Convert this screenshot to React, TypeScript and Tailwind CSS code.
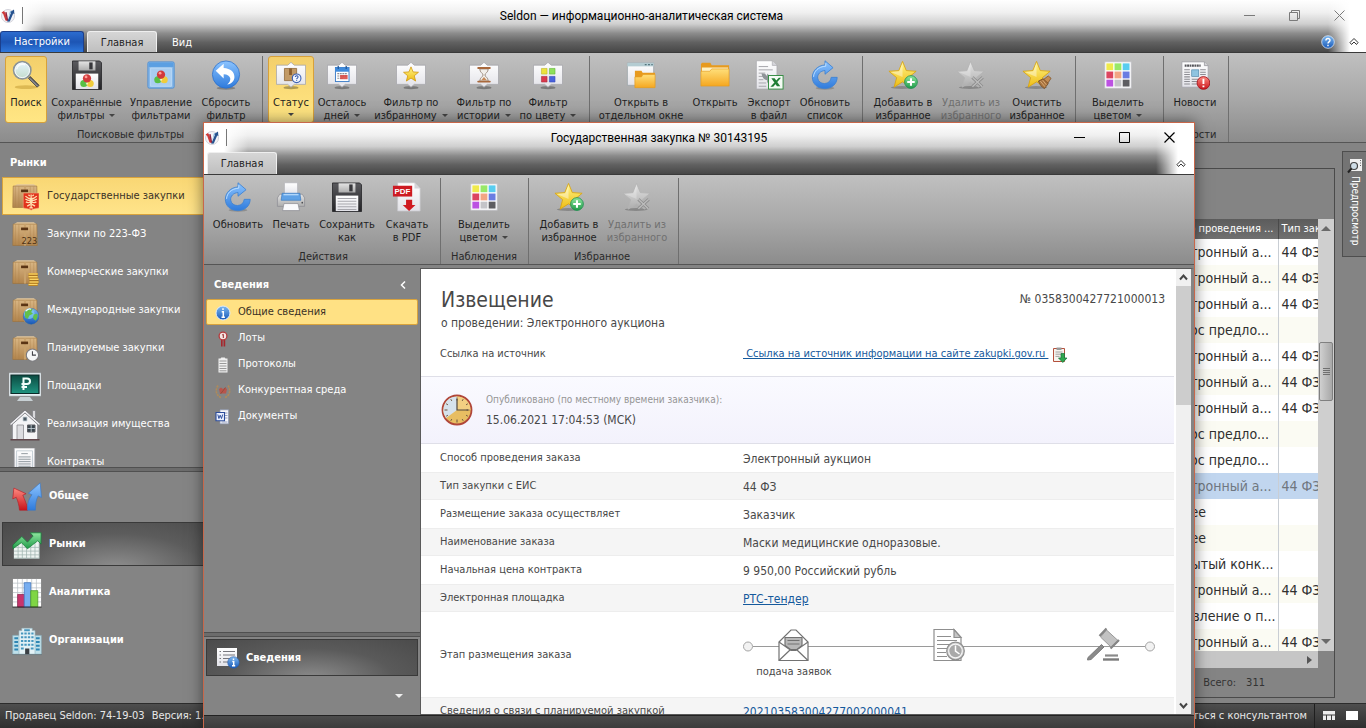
import React from "react";

type Kids = { children?: React.ReactNode };

/* ---------- shared paint ---------- */

function Paints() {
  const stops: [string, string, string][] = [
    ["gYellow", "#fff58a", "#eebc12"],
    ["gFolder", "#ffdf7a", "#f5a720"],
    ["gBlue", "#8cc4ff", "#2f7bdc"],
    ["gBall", "#7db9f2", "#1758b8"],
    ["gGrey", "#e4e4e4", "#adadad"],
    ["gWhite", "#ffffff", "#e2e2e8"],
    ["gGreen", "#8fe6a0", "#1f9a48"],
    ["gRed", "#ff8a80", "#c8141c"],
    ["gBox", "#d9b684", "#b1844d"],
    ["gDark", "#5a5a5e", "#232326"],
    ["gTeal", "#0b4a41", "#1f9480"],
    ["gGlass", "#e6f5ff", "#c3dccb"],
  ];
  return (
    <svg className="absolute size-0" aria-hidden="true">
      <defs>
        {stops.map(([id, a, b]) => (
          <linearGradient key={id} id={id} x1="0" y1="0" x2="0" y2="1">
            <stop offset="0" stopColor={a} />
            <stop offset="1" stopColor={b} />
          </linearGradient>
        ))}
      </defs>
    </svg>
  );
}

function Icon({ children, className = "size-[30px]" }: Kids & { className?: string }) {
  return (
    <svg viewBox="0 0 32 32" className={`${className} shrink-0`} aria-hidden="true">
      {children}
    </svg>
  );
}

/* ---------- icons ---------- */

const Logo = () => (
  <svg viewBox="0 0 16 16" className="size-4 shrink-0" aria-hidden="true">
    <circle cx="8" cy="8" r="6.5" fill="#f4f4f8" stroke="#d2d2da" />
    <path d="M1.5 4.5 4 3l1.5 2.3L7.6 13 5.5 12.4 3.2 6Z" fill="#cf3a3a" />
    <path d="M5.2 4.2 6.6 4l1.6 8.5-1.2.5Z" fill="#8c2440" />
    <path d="M7.2 13.8 11 4.8 9.9 4.2 14 1.5l.4 4.6-1.2-.5-3.4 7.8Z" fill="#27538f" />
    <path d="M8.2 11 10 3l1 .4Z" fill="#7fb4df" />
  </svg>
);

const Magnifier = () => (
  <Icon>
    <ellipse cx="16" cy="29" rx="12" ry="2" fill="#a57a10" opacity=".35" />
    <path d="m18.5 19.5 9.5 9.5 2-2-9.5-9.5Z" fill="#59595c" stroke="#3c3c40" strokeWidth=".8" />
    <path d="m20 19.5 8.5 8.5" stroke="#b9b9be" strokeWidth="1" />
    <circle cx="12" cy="11" r="9.2" fill="url(#gGlass)" stroke="#8b9498" strokeWidth="1.8" />
    <circle cx="12" cy="11" r="7.8" fill="none" stroke="#f7fbff" strokeWidth="1" />
    <path d="M6 10a6.5 6.5 0 0 1 9-5" fill="none" stroke="#fff" strokeWidth="1.6" opacity=".8" />
  </Icon>
);

const Balls = ({ x, y }: { x: number; y: number }) => (
  <g transform={`translate(${x} ${y})`}>
    <circle cx="-3.4" cy="3" r="3.8" fill="#58bf45" />
    <circle cx="3.4" cy="3" r="3.8" fill="#f0cc3c" />
    <circle cx="0" cy="-2.4" r="4.4" fill="#d23a3c" />
    <circle cx="-1" cy="-4" r="1.5" fill="#ff9c96" />
    <path d="M-1.6 2.2h3.2L0 5Z" fill="#fff" opacity=".7" />
  </g>
);

const Floppy = ({ filter }: { filter?: boolean }) => (
  <Icon>
    <path d="M.5 1h29l2 2v28.500h-31Z" fill="url(#gDark)" stroke="#1e1e20" strokeWidth=".8" />
    <path d="M7 1.4h18v9.800H7Z" fill="url(#gGrey)" />
    <path d="M18.400 2.600h3.600v7.400h-3.600Z" fill="#37373b" />
    <path d="M4 14.500h24V31H4Z" fill="url(#gWhite)" />
    {filter ? (
      <Balls x={16} y={22} />
    ) : (
      <path d="M6 17.500h20M6 20.500h20M6 23.500h20M6 26.500h20M6 29.300h20" stroke="#a8a8ae" strokeWidth="1.100" />
    )}
  </Icon>
);

const FilterWindow = () => (
  <Icon>
    <rect x="2" y="2" width="28" height="28" rx="1.5" fill="#86b7e8" stroke="#4f8fd2" />
    <rect x="2.8" y="2.8" width="26.4" height="4.6" fill="#5b9fe2" />
    <rect x="5" y="8.5" width="22" height="19.5" fill="#a9cdf0" stroke="#c6e0f8" strokeWidth=".8" />
    <Balls x={16} y={18} />
  </Icon>
);

const UndoBall = () => (
  <Icon>
    <ellipse cx="16" cy="30" rx="10" ry="1.6" fill="#000" opacity=".25" />
    <circle cx="16" cy="15.5" r="14.5" fill="url(#gBlue)" stroke="#2b6fc9" strokeWidth=".8" />
    <path d="M5 11.500 13.500 4v4.600c7.500.4 11.500 4.500 11.500 9.400 0 4.300-3.300 7.500-7.700 8 2.500-2 3.600-4.200 3.200-6.500-.5-2.600-3-4.300-7-4.400v4.700Z" fill="#fff" />
  </Icon>
);

const Frame = ({ children }: Kids) => (
  <Icon>
    <ellipse cx="16" cy="29.500" rx="8" ry="1.800" fill="#000" opacity=".3" />
    <path d="M.5 5.500H12.500L16 2.500l3.500 3H31.500V26H19.500L16 29l-3.500-3H.5Z" fill="url(#gWhite)" stroke="#a3a3a8" strokeWidth=".8" />
    {children}
  </Icon>
);

const StarPath = "M16 1.500 20 11.300 30.500 12 22.300 18.800 25 29 16 23.300 7 29 9.700 18.800 1.500 12 12 11.300Z";

const StatusIcon = () => (
  <Frame>
    <path d="M9 9h13v13H9Z" fill="#c29a66" stroke="#8b6434" strokeWidth=".8" />
    <path d="M14 9h3v7h-3Z" fill="#8a5d2c" />
    <circle cx="22" cy="19.500" r="4.600" fill="#f2f6ff" stroke="#3c62b4" strokeWidth="1.200" />
    <path d="M20.500 18.200c.2-2 3.300-1.800 3 .1-.2 1-1.500 1-1.500 2.200M22 21.600v.9" fill="none" stroke="#2b50a8" strokeWidth="1.100" />
  </Frame>
);
const CalendarIcon = () => (
  <Frame>
    <rect x="9" y="8" width="14.500" height="15" fill="#fff" stroke="#3a7bc6" />
    <path d="M9 8h14.500v4.500H9Z" fill="#3f8bdc" />
    <path d="M12 6.500v3M20.500 6.500v3" stroke="#245b9c" strokeWidth="1.400" />
    <path d="M11 14.500h10.500M11 17h10.500M11 19.500h6" stroke="#8d8d94" strokeWidth="1.200" strokeDasharray="2 .7" />
    <path d="M14 16h8v4.500h-8Z" fill="#d8433c" opacity=".85" />
  </Frame>
);
const FavFilter = () => (
  <Frame>
    <path d={StarPath} transform="translate(7.200 6.500) scale(.55)" fill="url(#gYellow)" stroke="#d0960c" strokeWidth="1.500" />
  </Frame>
);
const HourglassIcon = () => (
  <Frame>
    <path d="M11.500 9.500c0 4 3.500 4.500 3.500 6.500s-3.500 2.500-3.500 6.500h9c0-4-3.500-4.500-3.500-6.500s3.500-2.500 3.500-6.500Z" fill="#f2efea" stroke="#9a8a7c" strokeWidth="1" />
    <path d="M13 21.500 16 18l3 3.500Z" fill="#c58a5a" />
    <path d="M9.800 8.500h12.400M9.800 23h12.400" stroke="#a8683c" strokeWidth="2" strokeLinecap="round" />
  </Frame>
);
const ColorFilter = () => (
  <Frame>
    <path d="M9 9h6v6H9Z" fill="#ece23c" stroke="#b9b02c" strokeWidth=".6" />
    <path d="M17.500 9h6v6h-6Z" fill="#8ee05a" stroke="#62b036" strokeWidth=".6" />
    <path d="M9 17.500h6v6H9Z" fill="#d9384c" stroke="#a8283a" strokeWidth=".6" />
    <path d="M17.500 17.500h6v6h-6Z" fill="#4a62dc" stroke="#3449b4" strokeWidth=".6" />
  </Frame>
);

const Folder = () => (
  <Icon>
    <path d="M1 4.500 2 3h9l1.500 2.500H31v22H1Z" fill="#e79a1e" />
    <path d="M2 8h28v6H2Z" fill="#fff2c4" />
    <path d="M1 12h9.500l2-2.500H31v18.300H1Z" fill="url(#gFolder)" stroke="#e39b22" strokeWidth=".7" />
  </Icon>
);
const WindowFolder = () => (
  <Icon>
    <path d="M1.500 3h28v24h-28Z" fill="url(#gWhite)" stroke="#9aa3a8" strokeWidth=".8" />
    <path d="M1.500 3h28v3.800h-28Z" fill="#b4ccd2" />
    <path d="M20 5h2M23.500 5h2M27 5h1.500" stroke="#54757e" strokeWidth="1.400" />
    <path d="M9.500 11.500h7l1.200 2H31v15.500H9.500Z" fill="#e79a1e" />
    <path d="M9.500 18h7l1.500-2.500H31v14H9.500Z" fill="url(#gFolder)" stroke="#e39b22" strokeWidth=".7" />
  </Icon>
);
const ExcelDoc = () => (
  <Icon>
    <path d="M2.500.8h17l5 5V31h-22Z" fill="url(#gWhite)" stroke="#a9a9ae" strokeWidth=".8" />
    <path d="M19.500.8v5h5" fill="#d5d5da" stroke="#a9a9ae" strokeWidth=".7" />
    <path d="M5 7h10M5 10.500h15M5 14h7M5 17.500h6M5 21h5M5 24.500h8M5 28h8" stroke="#a2a2a8" strokeWidth="1" />
    <path d="M8 14.500c4 0 5 1 6 3v-3l5.500 5-5.500 5v-3c-3 0-5-2-6-7Z" fill="#8f9498" />
    <rect x="15.500" y="16.500" width="15.500" height="14.500" fill="#f5fbf5" stroke="#2f8a3e" />
    <path d="m18.500 19.500 3.500 0 6 8.500h-3.500ZM26.500 19h2.300L20.500 28.500h-3Z" fill="#1f7d34" />
  </Icon>
);
const Refresh = () => (
  <Icon>
    <ellipse cx="16" cy="30" rx="10" ry="1.600" fill="#000" opacity=".18" />
    <path
      d="M16 .8 24.600 8.200 16 15.200V11.200C11 11.600 7.700 15.300 8.200 19.300c.5 3.500 3.500 5.900 7.200 5.800 4.200-.1 6.800-2.700 7.200-6.600H29c-.2 7.300-5.700 12-13.200 12C8 30.500 2.500 25.400 2.500 18.500 2.500 11.500 8 5.800 16 5.300Z"
      fill="url(#gBlue)"
      stroke="#3d81d2"
      strokeWidth=".9"
    />
    <path d="M16.800 3.300v3.300C9 7 4 12 3.800 18" fill="none" stroke="#bfe0ff" strokeWidth="1" />
  </Icon>
);

const StarIcon = ({ children, off }: Kids & { off?: boolean }) => (
  <Icon>
    <ellipse cx="15" cy="29.300" rx="12" ry="1.600" fill="#000" opacity=".22" />
    <path d={StarPath} fill={off ? "url(#gGrey)" : "url(#gYellow)"} stroke={off ? "#b4b4b4" : "#d9a410"} strokeWidth=".9" transform="translate(-.500 0)" />
    <path d="M15.500 3 12 12 3 12.700 15.500 18Z" fill="#fff" opacity={off ? ".25" : ".4"} />
    {children}
  </Icon>
);
const StarAdd = () => (
  <StarIcon>
    <circle cx="24.500" cy="23.500" r="6.800" fill="url(#gGreen)" stroke="#1e9150" strokeWidth=".9" />
    <path d="M24.500 19.500v8M20.500 23.500h8" stroke="#fff" strokeWidth="2.200" />
  </StarIcon>
);
const StarRemove = () => (
  <StarIcon off>
    <path d="m17.500 18.500 10.500 10M28.500 18.500 17.500 28.500" stroke="#8c8c8c" strokeWidth="3.200" />
    <path d="m17.500 18.500 10.500 10M28.500 18.500 17.500 28.500" stroke="#bcbcbc" strokeWidth="1.500" />
  </StarIcon>
);
const StarClear = () => (
  <StarIcon>
    <path d="m28 17 3 2.500-4 6-5-4Z" fill="#c48b51" stroke="#7d5026" strokeWidth=".8" />
    <path d="m17.500 22.500 5-2.500 5.500 5-4 5.500c-3-1.500-5-4-6.500-8Z" fill="#a8733f" stroke="#6f4722" strokeWidth=".8" />
    <path d="m19.500 22.500 5 6M22 21.500l4 5" stroke="#e0b27c" strokeWidth=".9" />
  </StarIcon>
);

const PaletteGrid = () => {
  const cells = ["#f0ea4c", "#98e868", "#58cdf0", "#dc4560", "#f2a684", "#6a7de2", "#bc52e2", "#c4c4c8", "#5e5e62"];
  return (
    <Icon>
      <rect x="2" y="2" width="28" height="28" fill="#fff" stroke="#c6c6cc" strokeWidth=".8" />
      {cells.map((c, i) => (
        <rect key={c} x={3.6 + (i % 3) * 8.7} y={3.6 + Math.floor(i / 3) * 8.7} width="7.300" height="7.300" fill={c} />
      ))}
    </Icon>
  );
};

const Newspaper = () => (
  <Icon>
    <path d="M2 2h24l4 4v23H2Z" fill="url(#gWhite)" stroke="#a2a2a8" strokeWidth=".8" />
    <path d="M5 6h17" stroke="#55555a" strokeWidth="2.600" strokeDasharray="2 .6" />
    <path d="M26 2v4h4" fill="#d0d0d4" stroke="#8b8b90" strokeWidth=".7" />
    <path d="M4.500 10.500h6M4.500 13h6M4.500 15.500h6M4.500 18h6M4.500 20.500h6M4.500 23h6M4.500 25.500h6M21.500 10.500h6M21.500 13h6M21.500 15.500h6M12.500 20.500h8M12.500 23h6M12.500 25.500h6" stroke="#8d8d93" strokeWidth="1.100" />
    <rect x="12.500" y="10.500" width="7.500" height="7" fill="#8fc4e0" stroke="#4f86a8" strokeWidth=".7" />
    <circle cx="25" cy="24.500" r="6.800" fill="url(#gRed)" stroke="#a31018" strokeWidth=".9" />
    <path d="M25 20v5.500M25 27.200v1.800" stroke="#fff" strokeWidth="2" />
  </Icon>
);

const Printer = () => (
  <Icon>
    <path d="M9 .8h14V14H9Z" fill="url(#gWhite)" stroke="#b4b4ba" strokeWidth=".8" />
    <path d="M4 13h24l2.500 4v9H1.500v-9Z" fill="url(#gGrey)" stroke="#8e8e94" strokeWidth=".8" />
    <path d="M6.500 12h19l1 7.500h-21Z" fill="#5ea1e6" stroke="#3a78bd" strokeWidth=".7" />
    <path d="M8 13.500h16" stroke="#b0d6fa" strokeWidth="1.500" />
    <path d="M8.500 23h15l1.500 7.500H7Z" fill="#fafafc" stroke="#8e8e94" strokeWidth=".8" />
    <circle cx="28" cy="22" r=".9" fill="#4c4c50" />
  </Icon>
);

const PdfDoc = () => (
  <Icon>
    <path d="M6 .8h18l6 6V31H6Z" fill="url(#gWhite)" stroke="#c6c6ca" strokeWidth=".8" />
    <path d="M24 .8v6h6" fill="#d4d4d8" />
    <rect x="1" y="4" width="20.500" height="11.500" fill="#cd1a22" />
    <text x="11.200" y="13" textAnchor="middle" fontSize="8.500" fontWeight="bold" fill="#fff" fontFamily="Liberation Sans, sans-serif">PDF</text>
    <path d="M15 19h6.500v5.500H25L18.200 31 11.500 24.500H15Z" fill="#cf1a20" />
  </Icon>
);

/* side bar icons */

const Box = ({ children }: Kids) => (
  <Icon className="size-7">
    <path d="M3.500 3.500 7 1.500h19l3 2Z" fill="#e3c79c" />
    <path d="M2.500 3.500h27l.5 24.500H2Z" fill="url(#gBox)" stroke="#9c713c" strokeWidth=".7" />
    <path d="M5 4v23.500M9 4v23.500M22 4v23.500M26 4v23.500" stroke="#a97f48" strokeWidth=".6" opacity=".7" />
    <path d="M14.800 3.500h2.400v24.500h-2.400Z" fill="#c9a26c" />
    <path d="M11.500 7.500h8v3h-8Z" fill="#5a3414" />
    {children}
  </Icon>
);
const BoxEagle = () => (
  <Box>
    <path d="M14 11.500h18v17l-7.500 1.500-1.500 1-1.500-1-7.500-1.500Z" fill="#e2331c" stroke="#f2b48c" strokeWidth=".6" />
    <path
      d="M23 13v15M21.500 15l-1.500-1.500M24.500 15l1.500-1.500M22.500 18c-2 0-4-1-6-3M22.500 20c-2 .2-4-.3-6-1.800M22 22c-1.800.6-3.500.6-5-.4M23.500 18c2 0 4-1 6-3M23.500 20c2 .2 4-.3 6-1.800M24 22c1.800.6 3.500.6 5-.4M22 24.500l-3.500 2M24 24.500l3.500 2M21 28.500h4"
      fill="none"
      stroke="#ffe0b0"
      strokeWidth="1.500"
    />
    <path d="M21.300 17h3.400v5.500L23 24.500l-1.700-2Z" fill="#ffe0b0" />
  </Box>
);
const Box223 = () => (
  <Box>
    <text x="21" y="26.500" textAnchor="middle" fontSize="9.500" fill="#4e3315" fontFamily="DejaVu Sans, sans-serif">223</text>
  </Box>
);
const BoxCoins = () => (
  <Box>
    <path d="M20 17.500h10.500M20 20.500h10.500M21 23.500h10.500M21 26.500h10.500M20 29.500h10.500" stroke="#a46c10" strokeWidth="2.800" />
    <path d="M20 17.200h10.500M20 20.200h10.500M21 23.200h10.500M21 26.200h10.500M20 29.200h10.500" stroke="#fbd466" strokeWidth="1.800" />
  </Box>
);
const BoxGlobe = () => (
  <Box>
    <circle cx="23" cy="22" r="9" fill="url(#gBall)" stroke="#2666a8" strokeWidth=".6" />
    <circle cx="21" cy="19" r="6" fill="#7fd0f2" opacity=".7" />
    <path d="M16 17c3-4 7-4 9-3l-2 3 2 2-4 2-2 4-3-2ZM26 20l4-1c1 3 0 6-2 8l-3-3Z" fill="#63c04a" />
    <path d="M17 16c2-2 4-3 6-2" stroke="#e8f8ff" strokeWidth="1.500" fill="none" />
  </Box>
);
const BoxClock = () => (
  <Box>
    <circle cx="24.500" cy="23" r="7" fill="#f5f5f5" stroke="#7a7a7e" strokeWidth="1.200" />
    <path d="M24.500 18.500V23H28.500" fill="none" stroke="#3f3f44" strokeWidth="1.200" />
  </Box>
);
const MonitorRub = () => (
  <Icon className="size-8">
    <path d="M0 2h32v23H0Z" fill="#e8f0f4" stroke="#b4bcc0" strokeWidth=".6" />
    <path d="M2 4h28v18.500H2Z" fill="url(#gTeal)" stroke="#0a2a28" strokeWidth="1.200" />
    <path d="M14.500 19V7.500h3.500c4 0 4 5.500 0 5.500H12.500M12.500 16h5.500" fill="none" stroke="#f2fffb" strokeWidth="2" />
    <path d="M11 26h10l3 4H8Z" fill="#c7d0d4" />
  </Icon>
);
const House = () => (
  <Icon className="size-8">
    <path d="M23.500 1.500h3v8h-3Z" fill="#d9d9dc" stroke="#77777c" strokeWidth=".6" />
    <path d="M3.500 13 16 2l12.500 11V30.500h-25Z" fill="#f4f4f6" stroke="#8e8e94" strokeWidth=".8" />
    <path d="M.5 15 16 1l15.500 14-1.500 1.500L16 4 2 16.500Z" fill="#ededf0" stroke="#6e6e74" strokeWidth=".8" />
    <path d="M8 16h6.500v14.500H8Z" fill="#dcdce0" stroke="#8a8a90" strokeWidth=".8" />
    <path d="M18.500 16H26v7h-7.500Z" fill="#39444c" stroke="#5c5c62" />
    <path d="M22.200 16v7M18.500 19.500H26M14 8h4v4h-4Z" stroke="#c9d4dc" strokeWidth=".8" fill="#4f5c66" />
    <path d="M1.500 30.800h29" stroke="#55353a" strokeWidth="1.200" />
  </Icon>
);
const Contract = () => (
  <Icon>
    <path d="M4.500 0h22v31h-22Z" fill="url(#gWhite)" stroke="#9c9ca2" strokeWidth=".8" />
    <path d="M7 3h17v27H7Z" fill="none" stroke="#b7c3cb" strokeWidth=".8" />
    <path d="M12 6h7M9 9.500h13M9 12h13M9 14.500h13M9 17h13M9 19.500h13" stroke="#8f979d" strokeWidth="1" />
  </Icon>
);

const TwoArrows = () => (
  <Icon>
    <path d="M.8 18 2 6.500l13 6-3.500 1.500C13.500 19 16 24 17 30H8C7.500 25 6.500 20.500 4.500 16.300Z" fill="url(#gRed)" stroke="#b51d24" strokeWidth=".7" />
    <path d="M16.500 30c-.5-7 1.500-12 4.800-16.500L17.500 12 30 1l1.500 15.500-3.700-1.700C25.500 19.500 25 24 25 30Z" fill="url(#gBlue)" stroke="#3b78c4" strokeWidth=".7" />
  </Icon>
);
const GrowthGrid = () => (
  <Icon>
    <path d="M2 18 10 12l5 6L29 9v21.500H2Z" fill="#eef4f2" />
    <path d="M2 18.500h27M2 22.500h27M2 26.500h27M2 30h27M6.500 15v15.500M11 14v16.500M15.500 18v12.500M20 15v15.500M24.500 12v18.500M29 9v21.500" stroke="#9fb4b0" strokeWidth=".8" />
    <path d="M1 16 10.500 7l6 6 6-6.500-3-3.500H31v12l-3.500-3.500L16.500 20 10 13.500 1 20Z" fill="url(#gGreen)" stroke="#17803a" strokeWidth=".8" />
  </Icon>
);
const BarGrid = () => (
  <Icon>
    <rect x="1" y="1" width="30" height="30" fill="#fff" />
    <path d="M1 5.500h30M1 10.500h30M1 15.500h30M1 20.500h30M1 25.500h30M6 1v30M11 1v30M16 1v30M21 1v30M26 1v30" stroke="#b9c0c6" strokeWidth=".8" />
    <path d="M6 17.500h7.500V31H6Z" fill="#c8356c" stroke="#8d1f49" strokeWidth=".8" />
    <path d="M13 5h7v26h-7Z" fill="#77aef0" stroke="#3f74bd" strokeWidth=".8" />
    <path d="M20 13.500h7.500V31H20Z" fill="#7fd644" stroke="#4a9a22" strokeWidth=".8" />
    <path d="M.5 31h31" stroke="#222" strokeWidth="1" />
  </Icon>
);
const Buildings = () => (
  <Icon>
    <path d="M.8 10h7v20h-7ZM24.200 10h7v20h-7Z" fill="#bfe0ea" stroke="#8cb4c2" strokeWidth=".7" />
    <path d="M7.500 5h3V2.500h11V5h3v25h-17Z" fill="#e4f2f6" stroke="#9dbfca" strokeWidth=".7" />
    <path d="M2.500 13h4M2.500 17h4M2.500 21h4M2.500 25h4M25.500 13h4M25.500 17h4M25.500 21h4M25.500 25h4" stroke="#2f86b4" strokeWidth="2.200" />
    <path d="M9.500 8h13.500M9.500 12h13.500M9.500 16h13.500M9.500 20h13.500" stroke="#4797be" strokeWidth="2.200" strokeDasharray="2.500 1.200" />
    <path d="M9.500 24h3M20 24h3M13 4.500h6" stroke="#4797be" strokeWidth="2" />
    <path d="M14 24h4.500v6.500H14Z" fill="#3a3f44" />
    <path d="M0 30.500h32" stroke="#6d7a80" strokeWidth="1" />
  </Icon>
);
const SheetInfo = () => (
  <svg viewBox="0 0 24 22" className="h-[22px] w-6 shrink-0" aria-hidden="true">
    <path d="M1 1h20v18H1Z" fill="url(#gWhite)" />
    <path d="M3.500 4.500h1.500M7 4.500h12M3.500 8h1.500M7 8h12M3.500 11.500h1.500M7 11.500h8M3.500 15h1.500M7 15h6" stroke="#76767c" strokeWidth="1.100" />
    <circle cx="17.500" cy="15.500" r="5.800" fill="url(#gBall)" stroke="#2a5aa4" strokeWidth=".6" />
    <path d="M17.500 11.500v1.600M16.300 14.500h1.400v4M16 18.800h3.200" stroke="#fff" strokeWidth="1.500" fill="none" />
  </svg>
);

const Small = ({ children }: Kids) => (
  <svg viewBox="0 0 16 16" className="size-4 shrink-0" aria-hidden="true">
    {children}
  </svg>
);
const InfoBall = () => (
  <Small>
    <circle cx="8" cy="8" r="7" fill="url(#gBall)" stroke="#e3edf8" strokeWidth="1" />
    <path d="M8 3.200v1.700M6.700 6.700H8.300v5.200M6.500 12.200h3.400" stroke="#fff" strokeWidth="1.500" fill="none" />
  </Small>
);
const Rosette = () => (
  <Small>
    <path d="M6 8h1.600v7.500H6ZM8.600 8h1.600v7.500H8.600Z" fill="#a5262c" />
    <circle cx="8" cy="5" r="3.900" fill="#f6e4e2" stroke="#b4393c" strokeWidth="1.300" />
    <path d="M7.200 4 8.300 3.300V7" stroke="#94262a" strokeWidth="1" fill="none" />
  </Small>
);
const Protocol = () => (
  <Small>
    <path d="M3.500 1.500h2l.8-1h3.400l.8 1h2v14h-9Z" fill="#efefef" />
    <path d="M4.500 4h7M4.500 6.500h7M4.500 9h7M4.500 11.500h7M4.500 13.800h7" stroke="#8e8e8e" strokeWidth=".9" />
  </Small>
);
const Laurel = () => (
  <Small>
    <path d="M6 14.500C1 12.500 0 7 3 2.500M10 14.500c5-2 6-7.500 3-12" fill="none" stroke="#b08a58" strokeWidth="1.600" strokeDasharray="2.200 .8" />
    <path d="m4 6 2-1.500L8 6l2-1.500L12 6l-1 4.500H5Z" fill="#b8554c" />
    <path d="m5.500 11 5-6.500" stroke="#8a4a3a" strokeWidth=".8" />
  </Small>
);
const WordDoc = () => (
  <Small>
    <path d="M5 .8h8.500v14H5Z" fill="#f6f6fa" stroke="#8c98b4" strokeWidth=".7" />
    <path d="M9.500 4h3M9.500 6.500h3M9.500 9h3M6.500 13h6" stroke="#7d8cb0" strokeWidth=".8" />
    <path d="M1 3.500h8.500v8.300H1Z" fill="#e9efff" stroke="#2c4d9c" strokeWidth="1.100" />
    <path d="m2.800 5.500 1.100 4 1.300-3.300L6.500 9.500l1.200-4" stroke="#2c4d9c" strokeWidth="1" fill="none" />
  </Small>
);

/* ---------- ribbon ---------- */

type RibbonButtonProps = {
  icon: React.ReactNode;
  lines: string[];
  width: string;
  drop?: boolean;
  active?: boolean;
  off?: boolean;
};

const Caret = ({ className = "" }: { className?: string }) => (
  <span className={`inline-block h-0 w-0 border-x-[3px] border-t-[3px] border-x-transparent border-t-[#444] ${className}`} />
);

function RibbonButton({ icon, lines, width, drop, active, off }: RibbonButtonProps) {
  return (
    <button
      type="button"
      disabled={off}
      className={`flex h-[67px] shrink-0 flex-col items-center pt-[3px] text-[11px] leading-[13px] whitespace-nowrap ${width} ${
        active ? "rounded-[3px] border border-[#d7a13a] bg-linear-to-b from-[#f3cf6b] via-[#fbdc78] to-[#ffe684]" : "border border-transparent"
      } ${off ? "text-[#707070]" : "text-[#1f1f1f]"}`}
    >
      <span className="mb-[6px] flex">{icon}</span>
      {lines.map((l, i) => (
        <span key={l} className="flex items-center">
          {l}
          {drop && lines.length > 1 && i === lines.length - 1 && <Caret className="ml-[5px]" />}
        </span>
      ))}
      {drop && lines.length === 1 && <Caret className="mt-[4px]" />}
    </button>
  );
}

function Group({ label, pad, children }: Kids & { label?: string; pad: string }) {
  return (
    <div className={`flex h-full flex-col border-r border-[#6f6f6f] pl-[5px] ${pad}`}>
      <div className="flex">{children}</div>
      {label && <div className="text-center text-[11px] leading-[23px] text-[#2a2a2a]">{label}</div>}
    </div>
  );
}

const ribbonBg = "bg-linear-to-b from-[#c0c0c0] via-[#a9a9a9] to-[#8c8c8c]";
const tabClass = "rounded-t-[3px] border border-b-0 border-[#efefef] bg-linear-to-b from-[#d6d6d6] to-[#bfbfbf] pt-[2px] text-center text-[11px] text-[#1f1f1f]";

const ChevronUp = () => (
  <svg viewBox="0 0 10 9" className="h-[9px] w-[10px]" aria-hidden="true">
    <path d="M1 5.500 5 1.500l4 4-1.500 2L5 5 2.500 7.500Z" fill="#fff" stroke="#333" strokeWidth="1" />
  </svg>
);

function MainRibbon() {
  return (
    <div className={`flex h-[90px] shrink-0 items-stretch border-b border-[#555] pt-[3px] ${ribbonBg}`}>
      <Group label="Поисковые фильтры" pad="pr-[6px]">
        <RibbonButton active icon={<Magnifier />} lines={["Поиск"]} width="w-[42px]" />
        <RibbonButton drop icon={<Floppy filter />} lines={["Сохранённые", "фильтры"]} width="w-[79px]" />
        <RibbonButton icon={<FilterWindow />} lines={["Управление", "фильтрами"]} width="w-[70px]" />
        <RibbonButton icon={<UndoBall />} lines={["Сбросить", "фильтр"]} width="w-[60px]" />
      </Group>
      <Group pad="pr-[9px]">
        <RibbonButton active drop icon={<StatusIcon />} lines={["Статус"]} width="w-[46px]" />
        <RibbonButton drop icon={<CalendarIcon />} lines={["Осталось", "дней"]} width="w-[56px]" />
        <RibbonButton drop icon={<FavFilter />} lines={["Фильтр по", "избранному"]} width="w-[82px]" />
        <RibbonButton drop icon={<HourglassIcon />} lines={["Фильтр по", "истории"]} width="w-[64px]" />
        <RibbonButton drop icon={<ColorFilter />} lines={["Фильтр", "по цвету"]} width="w-[64px]" />
      </Group>
      <Group pad="pr-[7px]">
        <RibbonButton icon={<WindowFolder />} lines={["Открыть в", "отдельном окне"]} width="w-[92px]" />
        <RibbonButton icon={<Folder />} lines={["Открыть"]} width="w-[56px]" />
        <RibbonButton icon={<ExcelDoc />} lines={["Экспорт", "в файл"]} width="w-[52px]" />
        <RibbonButton icon={<Refresh />} lines={["Обновить", "список"]} width="w-[60px]" />
      </Group>
      <Group pad="pr-[5px]">
        <RibbonButton icon={<StarAdd />} lines={["Добавить в", "избранное"]} width="w-[70px]" />
        <RibbonButton off icon={<StarRemove />} lines={["Удалить из", "избранного"]} width="w-[66px]" />
        <RibbonButton icon={<StarClear />} lines={["Очистить", "избранное"]} width="w-[66px]" />
      </Group>
      <Group pad="pr-[8px]">
        <RibbonButton drop icon={<PaletteGrid />} lines={["Выделить", "цветом"]} width="w-[74px]" />
      </Group>
      <Group label="Новости" pad="pr-[7px]">
        <RibbonButton icon={<Newspaper />} lines={["Новости"]} width="w-[52px]" />
      </Group>
    </div>
  );
}

/* ---------- main window ---------- */

const titleBg =
  "bg-[linear-gradient(to_right,#fff_0,#fff_20px,transparent_44px),linear-gradient(to_left,#fff_0,#fff_16px,transparent_38px),linear-gradient(to_bottom,#fff_0,#f0f0f0_24%,#cfcfcf_46%,#8c8c8c_64%,#606060_82%,#474747_100%)]";

function MainTitle() {
  return (
    <header className={`flex h-[53px] shrink-0 flex-col justify-between border-b border-[#3a3a3a] ${titleBg}`}>
      <div className="flex h-[31px] items-center">
        <div className="flex w-24 items-center gap-[6px]">
          <Logo />
          <span className="h-[17px] w-px bg-[#777]" />
        </div>
        <h1 className="flex-1 pr-[57px] text-center font-[Roboto,sans-serif] text-[12px] text-black">Seldon — информационно-аналитическая система</h1>
        <div className="flex w-[122px] items-center gap-[34px] text-[#7a7a7a]">
          <button type="button" aria-label="Свернуть">
            <svg viewBox="0 0 11 11" className="size-[11px]"><path d="M0 5.500h11" stroke="currentColor" /></svg>
          </button>
          <button type="button" aria-label="Восстановить">
            <svg viewBox="0 0 11 11" className="size-[11px]"><path d="M.5 2.500h8v8h-8ZM2.500 2.500v-2h8v8h-2" fill="none" stroke="currentColor" /></svg>
          </button>
          <button type="button" aria-label="Закрыть">
            <svg viewBox="0 0 11 11" className="size-[11px]"><path d="m.5.5 10 10M10.500.5l-10 10" stroke="currentColor" /></svg>
          </button>
        </div>
      </div>
      <nav className="flex h-[21px] items-stretch text-[11px]">
        <button type="button" className="w-[84px] rounded-t-[3px] border border-b-0 border-[#1c3f8c] bg-linear-to-b from-[#2c6ccf] via-[#1d55b4] to-[#2f78dc] pt-px text-white">Настройки</button>
        <button type="button" className={`ml-[3px] w-[70px] ${tabClass}`}>Главная</button>
        <button type="button" className="w-[50px] pt-[3px] text-white">Вид</button>
        <div className="ml-auto flex items-center gap-[14px] pr-[7px]">
          <button type="button" aria-label="Справка">
            <svg viewBox="0 0 14 14" className="size-[14px]">
              <circle cx="7" cy="7" r="6.300" fill="url(#gBall)" stroke="#dce9f8" strokeWidth=".8" />
              <path d="M4.900 5.500C5 2.800 9.200 3 9 5.400 8.900 6.900 7 6.900 7 8.600M7 9.800v1.400" fill="none" stroke="#fff" strokeWidth="1.400" />
            </svg>
          </button>
          <button type="button" aria-label="Свернуть ленту"><ChevronUp /></button>
        </div>
      </nav>
    </header>
  );
}

function Sidebar() {
  const items: [React.ReactNode, string][] = [
    [<BoxEagle />, "Государственные закупки"],
    [<Box223 />, "Закупки по 223-ФЗ"],
    [<BoxCoins />, "Коммерческие закупки"],
    [<BoxGlobe />, "Международные закупки"],
    [<BoxClock />, "Планируемые закупки"],
    [<MonitorRub />, "Площадки"],
    [<House />, "Реализация имущества"],
    [<Contract />, "Контракты"],
  ];
  const cats: [React.ReactNode, string][] = [
    [<TwoArrows />, "Общее"],
    [<GrowthGrid />, "Рынки"],
    [<BarGrid />, "Аналитика"],
    [<Buildings />, "Организации"],
  ];
  return (
    <aside className="flex w-[230px] shrink-0 flex-col overflow-hidden bg-[#848484] text-[11px] text-white">
      <div className="flex min-h-0 flex-1 flex-col overflow-hidden">
        <h2 className="h-[34px] shrink-0 pt-1 pl-[10px] text-[11px] leading-[32px] font-bold">Рынки</h2>
        {items.map(([icon, text], i) => (
          <button
            key={text}
            type="button"
            className={`ml-[2px] flex h-[38px] shrink-0 items-center gap-[6px] border pt-px pl-[6px] text-left ${
              i === 0 ? "border-[#d9a33c] bg-linear-to-b from-[#f9d774] to-[#ffe48a] text-[#3a3226]" : "border-transparent"
            }`}
          >
            <span className="flex w-8 justify-center">{icon}</span>
            {text}
          </button>
        ))}
      </div>
      <div className="h-[5px] shrink-0 border-y border-[#505050] bg-[#6c6c6c]" />
      <div className="flex h-[231px] shrink-0 flex-col">
        {cats.map(([icon, text], i) => (
          <button
            key={text}
            type="button"
            className={`my-[2px] ml-[2px] flex h-11 shrink-0 items-center gap-[7px] border pt-px pl-[9px] text-left font-bold ${
              i === 1
                ? "border-[#3a3a3a] bg-[radial-gradient(ellipse_at_50%_110%,#909090_0%,#5c5c5c_55%,#4a4a4a_100%)]"
                : "border-transparent"
            }`}
          >
            {icon}
            {text}
          </button>
        ))}
      </div>
    </aside>
  );
}

const e = "Электронный а...";
const z = "Запрос предло...";
const rows: [string, string][] = [
  [e, "44 ФЗ"], [e, "44 ФЗ"], [e, "44 ФЗ"], [z, ""], [e, "44 ФЗ"], [e, "44 ФЗ"], [e, "44 ФЗ"], [z, ""],
  [z, ""], [e, "44 ФЗ"], ["Прочее", ""], ["Прочее", ""], ["Открытый конк...", ""], [e, "44 ФЗ"],
  ["Объявление о п...", ""], [e, "44 ФЗ"],
];

function GridPanel() {
  return (
    <main className="flex min-w-0 flex-1 flex-col pt-[25px] pb-[5px]">
      <div className="flex min-h-0 flex-1 flex-col border border-l-0 border-[#4a4a4a] bg-[#848484]">
        <div className="h-[50px] shrink-0" />
        <div className="flex min-h-0 flex-1">
          <div className="min-w-0 flex-1 overflow-hidden">
            <table className="w-full table-fixed border-collapse whitespace-nowrap">
              <thead>
                <tr className="h-5 bg-linear-to-b from-[#5c5c5c] to-[#707070] text-left text-[11px] text-white">
                  <td />
                  <th className="w-[128px] border-r border-[#4a4a4a] pr-1 text-right font-normal">Способ проведения ...</th>
                  <th className="w-[40px] overflow-hidden pl-[3px] font-normal">Тип закупки</th>
                </tr>
              </thead>
              <tbody className="text-[14px] leading-[18px] text-[#303030]">
                {rows.map(([a, b], i) => (
                  <tr key={i} className={`h-[26px] ${i === 9 ? "bg-[#c1d6ef] text-[#707780]" : i % 2 ? "bg-[#fbfbf3]" : "bg-white"}`}>
                    <td />
                    <td className="border-r border-[#c9ced4] pl-2">{a}</td>
                    <td className="overflow-hidden pl-[3px]">{b}</td>
                  </tr>
                ))}
              </tbody>
            </table>
          </div>
          <div className="flex w-4 shrink-0 flex-col items-center bg-[#cfcfcf] py-[7px]">
            <span className="h-0 w-0 border-x-[5px] border-b-[5px] border-x-transparent border-b-[#6a6a6a]" />
            <div className="mt-[111px] flex h-[59px] w-[14px] flex-col items-center justify-center gap-px rounded-[2px] border border-[#808080] bg-linear-to-r from-[#d0d0d0] to-[#a8a8a8]">
              <span className="h-px w-[7px] bg-[#707070]" />
              <span className="h-px w-[7px] bg-[#707070]" />
              <span className="h-px w-[7px] bg-[#707070]" />
              <span className="h-px w-[7px] bg-[#707070]" />
            </div>
            <span className="mt-auto h-0 w-0 border-x-[5px] border-t-[5px] border-x-transparent border-t-[#6a6a6a]" />
          </div>
        </div>
        <div className="mr-4 flex h-[17px] shrink-0 items-center justify-end bg-[#c6c6c6] pr-[6px]">
          <span className="h-0 w-0 border-y-[4px] border-l-[5px] border-y-transparent border-l-[#555]" />
        </div>
        <div className="flex h-[29px] shrink-0 items-center justify-end gap-[10px] pt-[2px] pr-[69px] text-[11px] text-[#333]">
          <span>Всего:</span>
          <span>311</span>
        </div>
      </div>
    </main>
  );
}

function StatusBar() {
  return (
    <footer className="flex h-[25px] shrink-0 items-center border-t border-[#2c2c2c] bg-linear-to-b from-[#4e4e4e] to-[#2f2f2f] pl-[5px] text-[11px] text-[#e8e8e8]">
      <span>Продавец Seldon: 74-19-03</span>
      <span className="ml-[7px]">Версия: 1.0</span>
      <a href="#consultant" className="ml-auto pr-[7px]">Связаться с консультантом</a>
      <div className="flex h-full items-center gap-[11px] border-l border-[#1f1f1f] pr-[8px] pl-[8px]">
        <svg viewBox="0 0 12 10" className="h-[10px] w-3" aria-hidden="true"><path d="M0 0h12v3.500H0ZM0 4.500h3V9H0ZM4 4.500h4V9H4ZM9 4.500h3V9H9Z" fill="#eee" /></svg>
        <svg viewBox="0 0 12 10" className="h-[10px] w-3" aria-hidden="true"><path d="M0 0h12v9H0Z" fill="#fff" /></svg>
      </div>
    </footer>
  );
}

/* ---------- record window ---------- */

function RecordTitle() {
  return (
    <header className={`flex h-[52px] shrink-0 flex-col justify-between border-b border-[#3a3a3a] ${titleBg}`}>
      <div className="flex h-[29px] items-center">
        <div className="flex w-24 items-center gap-[6px]">
          <Logo />
          <span className="h-[17px] w-px bg-[#777]" />
        </div>
        <h2 id="record-title" className="flex-1 pr-[56px] text-center font-[Roboto,sans-serif] text-[12px] text-black">Государственная закупка № 30143195</h2>
        <div className="flex w-[120px] items-center gap-[34px] text-black">
          <button type="button" aria-label="Свернуть окно">
            <svg viewBox="0 0 11 11" className="size-[11px]"><path d="M0 5.500h11" stroke="currentColor" /></svg>
          </button>
          <button type="button" aria-label="Развернуть окно">
            <svg viewBox="0 0 11 11" className="size-[11px]"><path d="M.5.5h10v10H.5Z" fill="none" stroke="currentColor" /></svg>
          </button>
          <button type="button" aria-label="Закрыть окно">
            <svg viewBox="0 0 11 11" className="size-[11px]"><path d="m.5.5 10 10M10.500.5l-10 10" stroke="currentColor" strokeWidth="1.200" /></svg>
          </button>
        </div>
      </div>
      <nav className="flex h-[22px] items-stretch pl-[3px]">
        <button type="button" className={`w-[70px] ${tabClass}`}>Главная</button>
        <button type="button" aria-label="Свернуть ленту окна" className="mr-[8px] ml-auto"><ChevronUp /></button>
      </nav>
    </header>
  );
}

function RecordRibbon() {
  return (
    <div className={`flex h-[90px] shrink-0 items-stretch border-b border-[#555] pt-[3px] pl-px ${ribbonBg}`}>
      <Group label="Действия" pad="pr-[4px]">
        <RibbonButton icon={<Refresh />} lines={["Обновить"]} width="w-[56px]" />
        <RibbonButton icon={<Printer />} lines={["Печать"]} width="w-[50px]" />
        <RibbonButton icon={<Floppy />} lines={["Сохранить", "как"]} width="w-[62px]" />
        <RibbonButton icon={<PdfDoc />} lines={["Скачать", "в PDF"]} width="w-[58px]" />
      </Group>
      <Group label="Наблюдения" pad="pr-[6px]">
        <RibbonButton drop icon={<PaletteGrid />} lines={["Выделить", "цветом"]} width="w-[76px]" />
      </Group>
      <Group label="Избранное" pad="pr-[8px]">
        <RibbonButton icon={<StarAdd />} lines={["Добавить в", "избранное"]} width="w-[70px]" />
        <RibbonButton off icon={<StarRemove />} lines={["Удалить из", "избранного"]} width="w-[66px]" />
      </Group>
    </div>
  );
}

function RecordNav() {
  const items: [React.ReactNode, string][] = [
    [<InfoBall />, "Общие сведения"],
    [<Rosette />, "Лоты"],
    [<Protocol />, "Протоколы"],
    [<Laurel />, "Конкурентная среда"],
    [<WordDoc />, "Документы"],
  ];
  return (
    <aside className="flex w-[216px] shrink-0 flex-col bg-[#848484] text-[11px] text-white">
      <div className="flex h-[31px] shrink-0 items-center justify-between pt-[3px] pr-[14px] pl-[10px]">
        <h3 className="font-bold">Сведения</h3>
        <svg viewBox="0 0 6 8" className="h-2 w-[6px]" aria-hidden="true"><path d="M5 .5 1.500 4 5 7.500" fill="none" stroke="#fff" strokeWidth="1.500" /></svg>
      </div>
      <div className="flex flex-1 flex-col px-[2px]">
        {items.map(([icon, text], i) => (
          <button
            key={text}
            type="button"
            className={`flex h-[26px] shrink-0 items-center gap-[7px] rounded-[2px] border pt-px pl-[8px] text-left ${
              i === 0 ? "border-[#d9a33c] bg-[#ffe184] text-[#3a3226]" : "border-transparent"
            }`}
          >
            {icon}
            {text}
          </button>
        ))}
      </div>
      <div className="h-[5px] shrink-0 border-y border-[#505050] bg-[#6c6c6c]" />
      <button
        type="button"
        className="mx-[2px] mt-[2px] flex h-[37px] shrink-0 items-center gap-[6px] border border-[#3a3a3a] bg-[radial-gradient(ellipse_at_50%_110%,#8c8c8c_0%,#5a5a5a_55%,#4b4b4b_100%)] pt-px pl-[9px] font-bold"
      >
        <SheetInfo />
        Сведения
      </button>
      <div className="flex h-[39px] shrink-0 items-center justify-end pr-[17px]">
        <span className="h-0 w-0 border-x-[4px] border-t-[4px] border-x-transparent border-t-[#eee]" />
      </div>
    </aside>
  );
}

function Stage() {
  return (
    <svg viewBox="0 8 420 36" className="h-9 w-[420px]" aria-hidden="true">
      <path d="M10 28.500h392" stroke="#9a9a9a" />
      <circle cx="5" cy="28.500" r="4.500" fill="#f2f2f2" stroke="#a4a4a4" />
      <circle cx="407" cy="28.500" r="4.500" fill="#f2f2f2" stroke="#a4a4a4" />
      <g stroke="#727272" strokeWidth="1.200">
        <path d="M36 24 48 12h5L65 24v18.500H36Z" fill="#fff" />
        <path d="M42 19.500h17v8l-5 4h-6.500l-5.500-4Z" fill="#b8b8b8" />
        <path d="M44.500 22.500h12M44.500 26h12" />
        <path d="M36 24 48 32.500h5L65 24M36 42.500 47 32M65 42.500 54 32" fill="none" />
      </g>
      <g stroke="#8f8f8f" strokeWidth="1.200">
        <path d="M191 11.500h20l7 8v23h-27Z" fill="#fff" />
        <path d="M211 11.500v8h7Z" fill="#c6c6c6" />
        <path d="M194 18.500h14M194 22.500h20M194 26.500h13M194 30.500h10M194 34.500h9M194 38.500h10" />
        <circle cx="212.500" cy="33" r="8.800" fill="#c9c9c9" />
        <circle cx="212.500" cy="33" r="6.800" fill="#a9a9a9" stroke="#f5f5f5" />
        <path d="M212.500 27.500V33l4 3" fill="none" stroke="#fff" strokeWidth="1.500" />
      </g>
      <path d="M345 39.500 358.500 26.500l2.500 2.500-13 12.500-3.500.5Z" fill="#8a8a8a" stroke="#7b7b7b" />
      <path d="m357.500 19 6-7 12 11-7 6.500Z" fill="#c2c2c2" stroke="#999" />
      <path d="m356.500 18 7-7.500M367.500 30.500l8.500-8.500" stroke="#858585" strokeWidth="2.200" />
      <path d="M362 37.500h13" stroke="#8a8a8a" strokeWidth="2.200" />
      <path d="M360 41.500h16" stroke="#7b7b7b" strokeWidth="2.400" />
    </svg>
  );
}

function Row({ label, shade, children }: Kids & { label: string; shade?: boolean }) {
  return (
    <div className={`grid h-7 shrink-0 grid-cols-[303px_1fr] items-center pt-px pl-[19px] ${shade ? "border-y border-[#ededed] bg-[#f5f5f5]" : "bg-white"}`}>
      <dt className="text-[11px]">{label}</dt>
      <dd className="text-[12px]">{children}</dd>
    </div>
  );
}

function RecordBody() {
  const link = "text-[#15599c] underline";
  return (
    <article className="flex min-w-0 flex-1 flex-col overflow-hidden bg-white pr-[2px] text-[#484848]">
      <div className="flex shrink-0 justify-between pt-[16px] pr-[9px] pl-5">
        <div>
          <h3 className="text-[21px] leading-[30px]">Извещение</h3>
          <p className="text-[12px] leading-[16px]">о проведении: Электронного аукциона</p>
        </div>
        <span className="pt-[6px] text-[12px] leading-[16px]">№ 0358300427721000013</span>
      </div>
      <div className="grid h-[45px] shrink-0 grid-cols-[303px_1fr] items-center pt-[2px] pl-[19px] text-[11px]">
        <span>Ссылка на источник</span>
        <span className="flex items-center gap-[4px]">
          <a href="#source" className={link}>&nbsp;Ссылка на источник информации на сайте zakupki.gov.ru&nbsp;</a>
          <Small>
            <path d="M1.500 1.500h11v13h-11Z" fill="#f6f3ee" stroke="#b4503c" strokeWidth="1" />
            <path d="M4.500.5h5v2.500h-5Z" fill="#9a9a9a" />
            <path d="M3.500 5h7M3.500 7.200h7M3.500 9.400h4" stroke="#8e8e8e" strokeWidth=".8" />
            <path d="M9 6.500h3.500V11H15l-4.200 4.500L6.500 11H9Z" fill="#2ea64e" stroke="#15733a" strokeWidth=".7" />
          </Small>
        </span>
      </div>
      <section className="flex h-[68px] shrink-0 items-center gap-[13px] border-y border-[#dfdfe8] bg-linear-to-b from-[#fafaff] to-[#f3f2fc] pl-5">
        <svg viewBox="0 0 32 32" className="size-8 shrink-0" aria-hidden="true">
          <circle cx="16" cy="16" r="14.500" fill="#e8be62" stroke="#b0463a" strokeWidth="1.800" />
          <path d="M16 16V2.500A13.500 13.500 0 0 0 5 24Z" fill="#d6e2ec" />
          <path d="M16 16H29.500A13.500 13.500 0 0 0 16 2.500Z" fill="#f2cf82" />
          <path d="M16 3.500v3M16 25.500v3M3.500 16h3M25.500 16h3M22.200 5.200l-1 1.700M26.800 9.800l-1.700 1M26.800 22.200l-1.700-1M22.200 26.800l-1-1.700M9.800 26.800l1-1.700M5.200 22.200l1.700-1M5.200 9.800l1.700 1M9.800 5.200l1 1.700" stroke="#6b5540" strokeWidth="1" />
          <path d="M16 5v11h11" fill="none" stroke="#51473c" strokeWidth="1.200" />
        </svg>
        <div>
          <p className="text-[10px] leading-[20px] text-[#959595]">Опубликовано (по местному времени заказчика):</p>
          <p className="text-[12px] leading-[20px]">15.06.2021 17:04:53 (МСК)</p>
        </div>
      </section>
      <dl className="flex min-h-0 flex-1 flex-col overflow-hidden">
        <Row label="Способ проведения заказа">Электронный аукцион</Row>
        <Row shade label="Тип закупки с ЕИС">44 ФЗ</Row>
        <Row label="Размещение заказа осуществляет">Заказчик</Row>
        <Row shade label="Наименование заказа">Маски медицинские одноразовые.</Row>
        <Row label="Начальная цена контракта">9 950,00 Российский рубль</Row>
        <Row shade label="Электронная площадка">
          <a href="#rts" className={link}>РТС-тендер</a>
        </Row>
        <div className="grid h-[85px] shrink-0 grid-cols-[303px_1fr] items-center pl-[19px] text-[11px]">
          <dt className="pt-[2px]">Этап размещения заказа</dt>
          <dd className="pb-[3px]">
            <Stage />
            <p className="mt-[2px] w-[102px] text-center leading-[16px]">подача заявок</p>
          </dd>
        </div>
        <Row shade label="Сведения о связи с планируемой закупкой">
          <a href="#plan" className={link}>202103583004277002000041</a>
        </Row>
      </dl>
    </article>
  );
}

function RecordWindow() {
  return (
    <section
      role="dialog"
      aria-labelledby="record-title"
      className="absolute top-[122px] right-[171px] bottom-0 left-[203px] flex flex-col overflow-hidden border border-b-0 border-[#c8674a] bg-[#848484] shadow-[0_0_14px_rgba(0,0,0,0.5)]"
    >
      <RecordTitle />
      <RecordRibbon />
      <div className="flex min-h-0 flex-1 pt-[3px]">
        <RecordNav />
        <div className="flex min-w-0 flex-1 border border-r-[3px] border-[#5a5a5a] border-r-[#848484]">
          <RecordBody />
          <div className="flex w-[15px] shrink-0 flex-col items-center bg-[#f0f0f0]">
            <svg viewBox="0 0 9 17" className="h-[17px] w-[9px] shrink-0" aria-hidden="true"><path d="m1 10.500 3.500-4 3.500 4" fill="none" stroke="#444" strokeWidth="2" /></svg>
            <div className="h-[119px] w-full shrink-0 bg-[#cdcdcd]" />
            <svg viewBox="0 0 9 17" className="mt-auto h-[17px] w-[9px] shrink-0" aria-hidden="true"><path d="m1 6.500 3.500 4 3.500-4" fill="none" stroke="#444" strokeWidth="2" /></svg>
          </div>
        </div>
      </div>
      <div className="h-[13px] shrink-0 border-t border-[#222] bg-linear-to-b from-[#4c4c4c] to-[#3c3c3c]" />
    </section>
  );
}

export default function App() {
  return (
    <div className="relative flex h-screen flex-col overflow-hidden bg-[#848484] font-['DejaVu_Sans_Condensed','Noto_Sans',sans-serif]">
      <Paints />
      <MainTitle />
      <MainRibbon />
      <div className="flex min-h-0 flex-1">
        <Sidebar />
        <GridPanel />
        <div className="w-[31px] shrink-0 pt-[8px] pl-[7px]">
          <button type="button" className="flex h-[106px] w-6 flex-col items-center gap-[2px] border border-r-0 border-[#4e4e4e] bg-[#747474] pt-[6px] text-[10px] text-white">
            <Small>
              <path d="M3 1h12v12H3Z" fill="#f0f0f0" />
              <path d="M13 2.500h1M13 5h1M13 7.500h1" stroke="#666" />
              <circle cx="7" cy="8" r="3.500" fill="#cfdde6" stroke="#444" strokeWidth="1.200" />
              <path d="m4.500 10.500-3.500 4" stroke="#222" strokeWidth="2" />
            </Small>
            <span className="leading-[14px] [writing-mode:vertical-rl]">Предпросмотр</span>
          </button>
        </div>
      </div>
      <StatusBar />
      <RecordWindow />
    </div>
  );
}
